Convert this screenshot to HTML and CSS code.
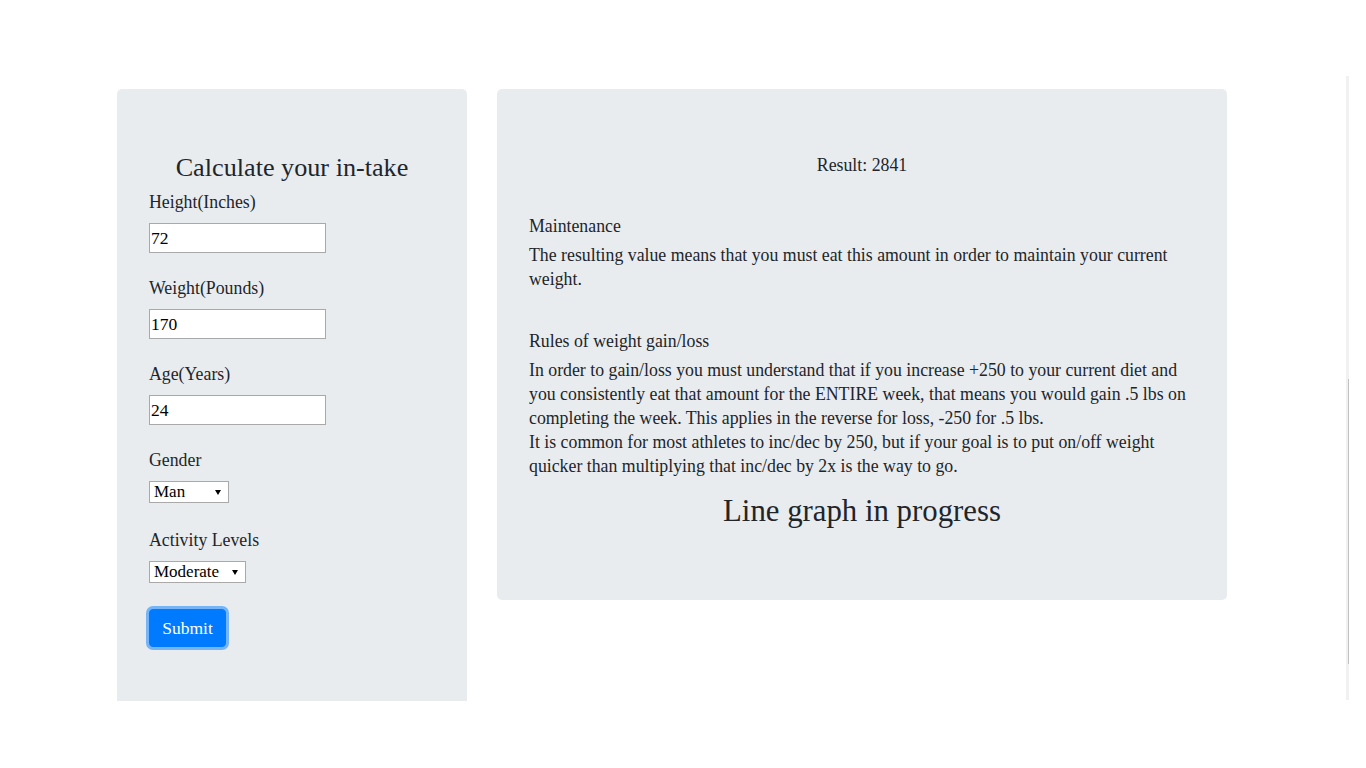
FILE: index.html
```html
<!DOCTYPE html>
<html lang="en">
<head>
<meta charset="utf-8">
<title>Calorie Intake</title>
<link rel="stylesheet" href="styles.css">
</head>
<body>
<div class="page">
  <div class="row">
    <form class="panel panel-form">
      <h4 class="form-title">Calculate your in-take</h4>
      <div class="field">
        <label>Height(Inches)</label>
        <input class="text-input" type="text" value="72">
      </div>
      <div class="field">
        <label>Weight(Pounds)</label>
        <input class="text-input" type="text" value="170">
      </div>
      <div class="field">
        <label>Age(Years)</label>
        <input class="text-input" type="text" value="24">
      </div>
      <div class="field field-select">
        <label>Gender</label>
        <span class="select-wrap select-gender">
          <select class="select"><option>Man</option><option>Woman</option></select>
        </span>
      </div>
      <div class="field field-select">
        <label>Activity Levels</label>
        <span class="select-wrap select-activity">
          <select class="select"><option>Moderate</option><option>Light</option><option>Heavy</option></select>
        </span>
      </div>
      <button class="btn-submit" type="button">Submit</button>
    </form>
    <section class="panel panel-result">
      <div class="result">Result: 2841</div>
      <div class="section-title">Maintenance</div>
      <p class="para para-first">The resulting value means that you must eat this amount in order to maintain your current weight.</p>
      <div class="section-title">Rules of weight gain/loss</div>
      <p class="para para-last">In order to gain/loss you must understand that if you increase +250 to your current diet and you consistently eat that amount for the ENTIRE week, that means you would gain .5 lbs on completing the week. This applies in the reverse for loss, -250 for .5 lbs.<br>It is common for most athletes to inc/dec by 250, but if your goal is to put on/off weight quicker than multiplying that inc/dec by 2x is the way to go.</p>
      <h3 class="graph-title">Line graph in progress</h3>
    </section>
  </div>
</div>
<div class="scroll-track"><div class="scroll-thumb"></div></div>
</body>
</html>
```

FILE: styles.css
```css
* { box-sizing: border-box; }
html, body { margin: 0; padding: 0; background: #fff; }
body {
  font-family: "Liberation Serif", "Times New Roman", serif;
  font-size: 17.8px;
  color: #212529;
  line-height: 24px;
}
.page { padding: 89px 0 0 117px; }
.row { display: flex; gap: 30px; align-items: flex-start; }
.panel { background: #e9ecef; }
.panel-form {
  width: 350px;
  padding: 64px 32px 54px;
  border-radius: 5px 5px 0 0;
}
.form-title {
  margin: 0 0 8px;
  font-size: 26.2px;
  font-weight: 400;
  line-height: 29px;
  text-align: center;
}
.field label { display: block; line-height: 24px; margin-bottom: 9px; }
.text-input {
  display: block;
  width: 177px;
  height: 30px;
  margin: 0 0 23px;
  padding: 0 1px;
  border: 1px solid #a9a9a9;
  border-radius: 0;
  background: #fff;
  font-family: "Liberation Serif", serif;
  font-size: 17.5px;
  color: #000;
}
.select-wrap { position: relative; display: inline-block; margin-bottom: 25px; vertical-align: top; }
.select-wrap::after {
  content: "";
  position: absolute;
  top: 9px;
  right: 8px;
  border-left: 3px solid transparent;
  border-right: 3px solid transparent;
  border-top: 5px solid #000;
  pointer-events: none;
}
.select {
  display: block;
  -webkit-appearance: none;
  appearance: none;
  height: 22px;
  padding: 0 0 0 4px;
  border: 1px solid #a9a9a9;
  border-radius: 0;
  background: #fff;
  font-family: "Liberation Serif", serif;
  font-size: 17px;
  line-height: 20px;
  color: #000;
}
.select-gender .select { width: 80px; }
.select-activity .select { width: 97px; }
.btn-submit {
  display: block;
  width: 77px;
  height: 38px;
  margin-top: 1px;
  padding: 0;
  border: 1px solid #007bff;
  border-radius: 4px;
  background: #007bff;
  color: #fff;
  font-family: "Liberation Serif", serif;
  font-size: 17.5px;
  box-shadow: 0 0 0 3px rgba(0, 123, 255, 0.5);
}
.panel-result {
  width: 730px;
  padding: 64px 32px;
  border-radius: 5px;
}
.result { text-align: center; margin-bottom: 37px; }
.section-title { margin-bottom: 5px; }
.para { margin: 0; }
.para-first { margin-bottom: 38px; }
.para-last { margin-bottom: 16px; }
.graph-title {
  margin: 0 0 8px;
  font-size: 30.8px;
  font-weight: 400;
  line-height: 34px;
  text-align: center;
}
.scroll-track {
  position: fixed;
  left: 1346px;
  top: 76px;
  width: 3px;
  height: 624px;
  background: #f1f1f1;
}
.scroll-thumb {
  position: absolute;
  left: 2px;
  top: 303px;
  width: 1px;
  height: 285px;
  background: #c1c1c1;
}
```
